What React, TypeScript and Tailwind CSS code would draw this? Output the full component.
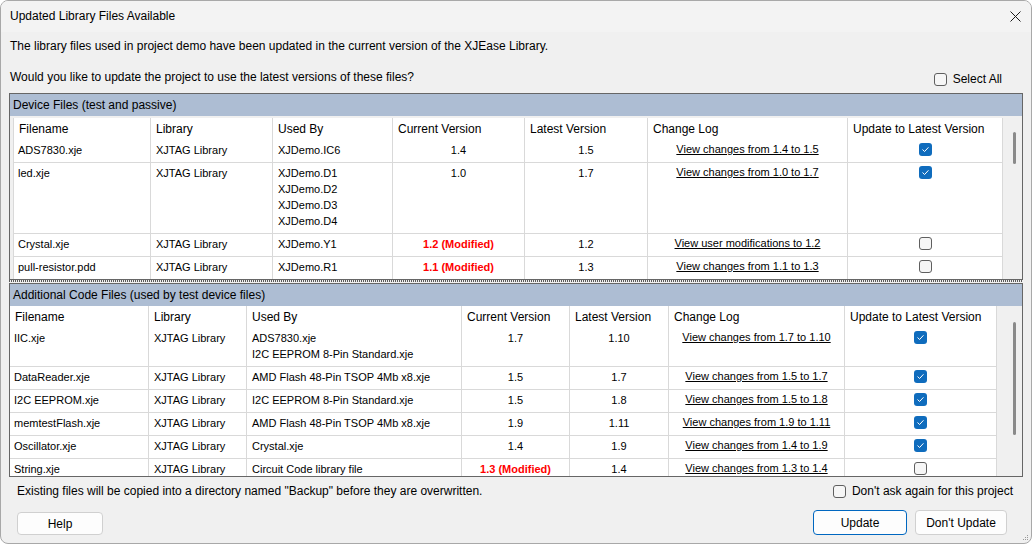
import React from "react";

type FileRow = {
    file: string;
    lib: string;
    used: string[];
    cur: string;
    mod?: boolean;
    latest: string;
    log: string;
    checked: boolean;
    h: string;
};

const deviceRows: FileRow[] = [
    { file: "ADS7830.xje", lib: "XJTAG Library", used: ["XJDemo.IC6"], cur: "1.4", latest: "1.5", log: "View changes from 1.4 to 1.5", checked: true, h: "h-[23px]" },
    { file: "led.xje", lib: "XJTAG Library", used: ["XJDemo.D1", "XJDemo.D2", "XJDemo.D3", "XJDemo.D4"], cur: "1.0", latest: "1.7", log: "View changes from 1.0 to 1.7", checked: true, h: "h-[71px]" },
    { file: "Crystal.xje", lib: "XJTAG Library", used: ["XJDemo.Y1"], cur: "1.2 (Modified)", mod: true, latest: "1.2", log: "View user modifications to 1.2", checked: false, h: "h-[23px]" },
    { file: "pull-resistor.pdd", lib: "XJTAG Library", used: ["XJDemo.R1"], cur: "1.1 (Modified)", mod: true, latest: "1.3", log: "View changes from 1.1 to 1.3", checked: false, h: "h-[23px]" },
];

const codeRows: FileRow[] = [
    { file: "IIC.xje", lib: "XJTAG Library", used: ["ADS7830.xje", "I2C EEPROM 8-Pin Standard.xje"], cur: "1.7", latest: "1.10", log: "View changes from 1.7 to 1.10", checked: true, h: "h-[39px]" },
    { file: "DataReader.xje", lib: "XJTAG Library", used: ["AMD Flash 48-Pin TSOP 4Mb x8.xje"], cur: "1.5", latest: "1.7", log: "View changes from 1.5 to 1.7", checked: true, h: "h-[23px]" },
    { file: "I2C EEPROM.xje", lib: "XJTAG Library", used: ["I2C EEPROM 8-Pin Standard.xje"], cur: "1.5", latest: "1.8", log: "View changes from 1.5 to 1.8", checked: true, h: "h-[23px]" },
    { file: "memtestFlash.xje", lib: "XJTAG Library", used: ["AMD Flash 48-Pin TSOP 4Mb x8.xje"], cur: "1.9", latest: "1.11", log: "View changes from 1.9 to 1.11", checked: true, h: "h-[23px]" },
    { file: "Oscillator.xje", lib: "XJTAG Library", used: ["Crystal.xje"], cur: "1.4", latest: "1.9", log: "View changes from 1.4 to 1.9", checked: true, h: "h-[23px]" },
    { file: "String.xje", lib: "XJTAG Library", used: ["Circuit Code library file"], cur: "1.3 (Modified)", mod: true, latest: "1.4", log: "View changes from 1.3 to 1.4", checked: false, h: "h-[23px]" },
];

const headers = ["Filename", "Library", "Used By", "Current Version", "Latest Version", "Change Log", "Update to Latest Version"];

function CheckBox({ checked }: { checked: boolean }) {
    if (checked) {
        return (
            <span className="flex h-[13px] w-[13px] items-center justify-center rounded-[3px] bg-[#0f6cbd]">
                <svg width="9" height="9" viewBox="0 0 9 9" fill="none">
                    <path d="M1.8 4.8 L3.6 6.5 L7.2 2.6" stroke="white" strokeWidth="1" strokeLinecap="round" strokeLinejoin="round" />
                </svg>
            </span>
        );
    }
    return <span className="block h-[13px] w-[13px] rounded-[3px] border border-[#5f5f5f] bg-[#f6f6f6]" />;
}

function Table({ rows, cols }: { rows: FileRow[]; cols: string }) {
    const cell = "border-r border-[#d9d9d9] overflow-hidden whitespace-nowrap";
    return (
        <div>
            <div className={`grid h-[22px] ${cols}`}>
                {headers.map((h) => (
                    <div key={h} className={`${cell} pl-[5px] pt-[3px] text-[12px] leading-[16px]`}>
                        {h}
                    </div>
                ))}
            </div>
            {rows.map((r) => (
                <div key={r.file} className={`grid ${cols} ${r.h} border-b border-[#d9d9d9] text-[11px] leading-[16px]`}>
                    <div className={`${cell} pl-[4px] pt-[2px]`}>{r.file}</div>
                    <div className={`${cell} pl-[5px] pt-[2px]`}>{r.lib}</div>
                    <div className={`${cell} pl-[5px] pt-[2px]`}>
                        {r.used.map((u) => (
                            <div key={u}>{u}</div>
                        ))}
                    </div>
                    <div className={`${cell} pt-[2px] text-center ${r.mod ? "font-bold text-[#ff0000]" : ""}`}>{r.cur}</div>
                    <div className={`${cell} pt-[2px] text-center`}>{r.latest}</div>
                    <div className={`${cell} pt-[1px] text-center`}>
                        <span className="underline">{r.log}</span>
                    </div>
                    <div className={`${cell} flex justify-center pt-[3px]`}>
                        <CheckBox checked={r.checked} />
                    </div>
                </div>
            ))}
        </div>
    );
}

export default function App() {
    return (
        <div className="relative flex h-[544px] w-[1032px] flex-col overflow-hidden rounded-[8px] border border-[#a8a8a8] bg-[#f0f0f0] font-['Liberation_Sans',sans-serif] text-[12px] text-black">
            <div className="flex h-[31px] shrink-0 items-center justify-between bg-[#f3f3f3] pb-[1px] pl-[9px] pr-[9px]">
                <span className="leading-[16px]">Updated Library Files Available</span>
                <svg width="11" height="11" viewBox="0 0 11 11" className="mr-[1px]">
                    <path d="M0.5 0.5 L10.5 10.5 M10.5 0.5 L0.5 10.5" stroke="#1b1b1b" strokeWidth="1" />
                </svg>
            </div>

            <div className="flex flex-1 flex-col px-[8px]">
                <p className="mt-[6px] pl-[1px] leading-[16px]">
                    The library files used in project demo have been updated in the current version of the XJEase Library.
                </p>
                <div className="mt-[15px] flex items-start justify-between pl-[1px] pr-[21px]">
                    <span className="leading-[16px]">Would you like to update the project to use the latest versions of these files?</span>
                    <label className="mt-[2px] flex items-center gap-[6px] leading-[16px]">
                        <CheckBox checked={false} />
                        Select All
                    </label>
                </div>

                {/* device files */}
                <div className="mt-[6px] flex h-[187px] shrink-0 flex-col border border-[#666666]">
                    <div className="h-[22px] shrink-0 bg-[#adbdd3] pl-[3px] pt-[3px] leading-[16px]">Device Files (test and passive)</div>
                    <div className="flex min-h-0 flex-1 pl-[3px] pt-[2px]">
                        <div className="w-[990px] shrink-0 overflow-hidden border-l border-[#d9d9d9] bg-white">
                            <Table rows={deviceRows} cols="grid-cols-[137px_122px_120px_132px_123px_200px_155px]" />
                        </div>
                        <div className="flex-1 pl-[10px] pt-[14px]">
                            <div className="h-[32px] w-[3px] rounded-full bg-[#8a8a8a]" />
                        </div>
                    </div>
                </div>

                <div className="h-[2px] shrink-0 bg-[repeating-linear-gradient(90deg,#5a5a5a_0px,#5a5a5a_1px,#f0f0f0_1px,#f0f0f0_2px)]" />

                {/* additional code files */}
                <div className="mt-[1px] flex h-[194px] shrink-0 flex-col border border-[#666666]">
                    <div className="h-[22px] shrink-0 bg-[#adbdd3] pl-[3px] pt-[3px] leading-[16px]">Additional Code Files (used by test device files)</div>
                    <div className="flex min-h-0 flex-1">
                        <div className="w-[987px] shrink-0 overflow-hidden bg-white">
                            <Table rows={codeRows} cols="grid-cols-[139px_98px_215px_108px_99px_176px_152px]" />
                        </div>
                        <div className="flex-1 pl-[16px] pt-[16px]">
                            <div className="h-[113px] w-[3px] rounded-full bg-[#8a8a8a]" />
                        </div>
                    </div>
                </div>

                <div className="mt-[6px] flex items-center justify-between pl-[8px] pr-[10px] leading-[16px]">
                    <span>Existing files will be copied into a directory named "Backup" before they are overwritten.</span>
                    <label className="flex items-center gap-[6px]">
                        <CheckBox checked={false} />
                        Don't ask again for this project
                    </label>
                </div>

                <div className="mt-[11px] flex items-start justify-between pl-[8px] pr-[16px]">
                    <button className="mt-[2px] h-[23px] w-[86px] rounded-[4px] border border-[#d0d0d0] bg-[#fdfdfd]">Help</button>
                    <div className="flex gap-[8px]">
                        <button className="h-[25px] w-[94px] rounded-[4px] border border-[#0067c0] bg-[#fdfdfd]">Update</button>
                        <button className="h-[25px] w-[92px] rounded-[4px] border border-[#d0d0d0] bg-[#fdfdfd]">Don't Update</button>
                    </div>
                </div>
            </div>

            <svg width="6" height="6" viewBox="0 0 6 6" className="absolute bottom-[2px] right-[2px]">
                <rect x="4" y="0" width="1" height="1" fill="#9a9a9a" />
                <rect x="2" y="2" width="1" height="1" fill="#9a9a9a" />
                <rect x="4" y="2" width="1" height="1" fill="#9a9a9a" />
                <rect x="0" y="4" width="1" height="1" fill="#9a9a9a" />
                <rect x="2" y="4" width="1" height="1" fill="#9a9a9a" />
                <rect x="4" y="4" width="1" height="1" fill="#9a9a9a" />
            </svg>
        </div>
    );
}
